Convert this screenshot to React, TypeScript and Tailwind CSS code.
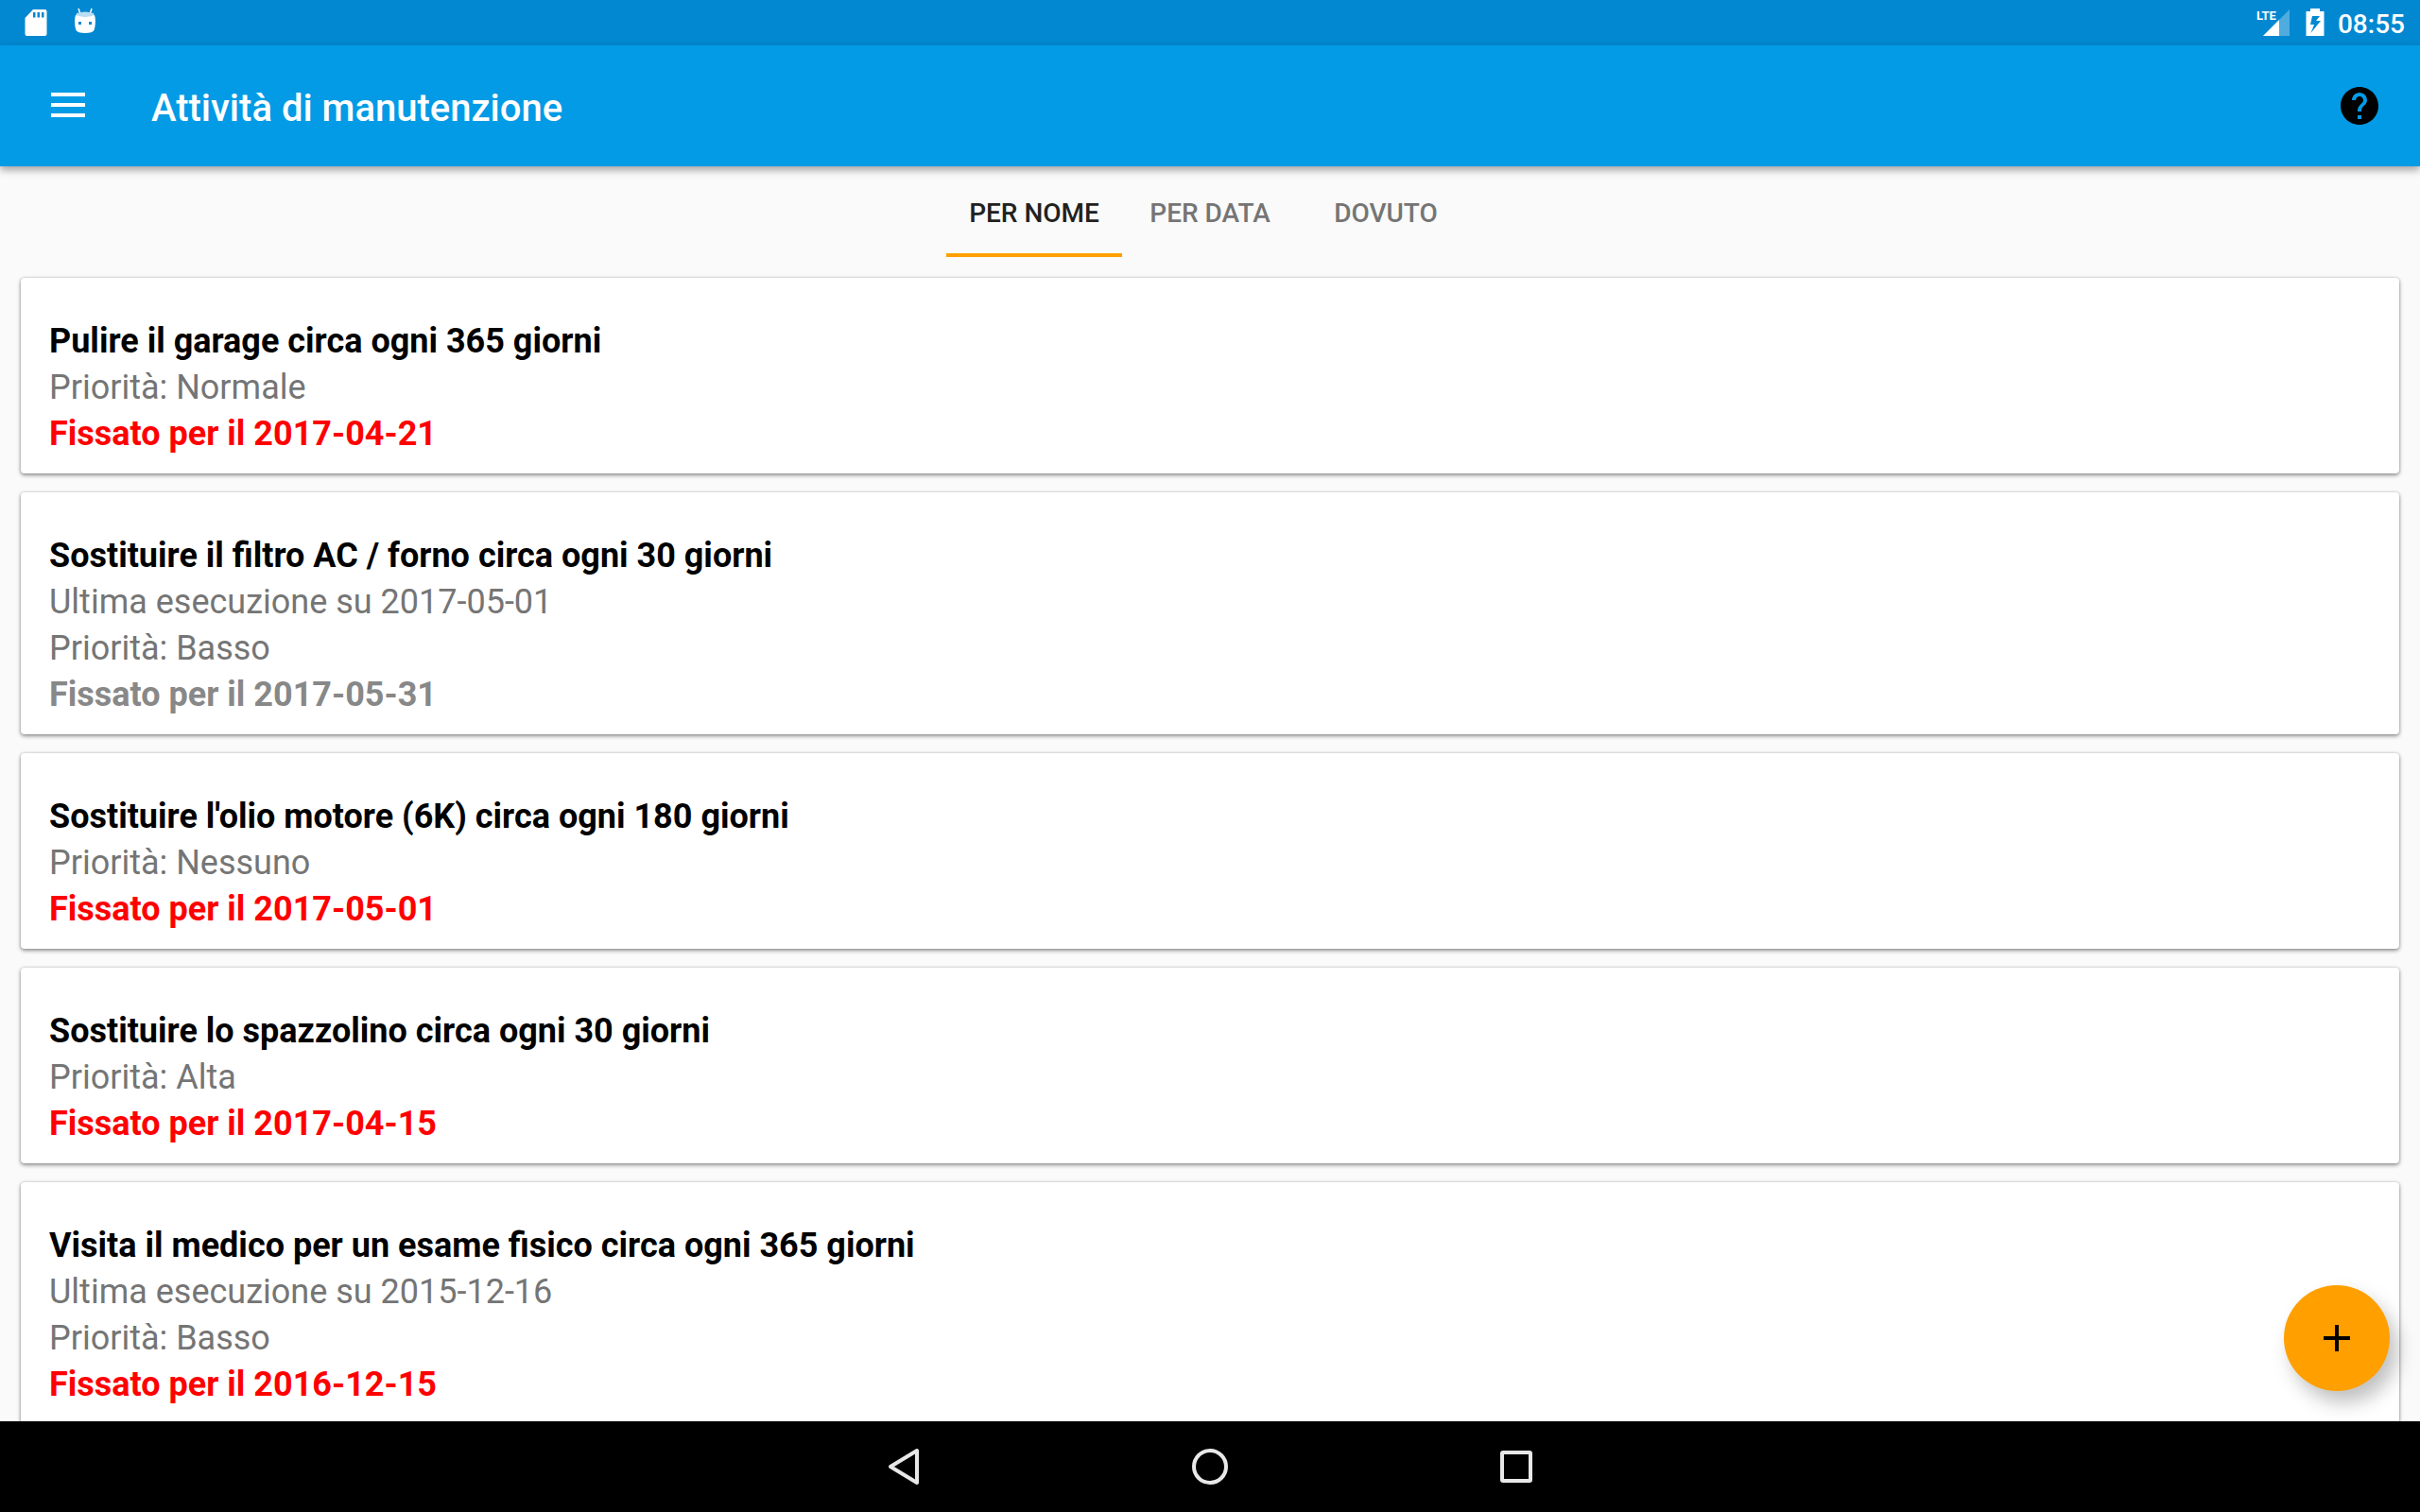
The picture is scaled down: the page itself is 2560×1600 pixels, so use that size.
import { useState } from "react";

type Task = {
  title: string;
  lastRun?: string;
  priority: string;
  due: string;
  overdue: boolean;
};

const TASKS: Task[] = [
  { title: "Pulire il garage circa ogni 365 giorni", priority: "Normale", due: "2017-04-21", overdue: true },
  { title: "Sostituire il filtro AC / forno circa ogni 30 giorni", lastRun: "2017-05-01", priority: "Basso", due: "2017-05-31", overdue: false },
  { title: "Sostituire l'olio motore (6K) circa ogni 180 giorni", priority: "Nessuno", due: "2017-05-01", overdue: true },
  { title: "Sostituire lo spazzolino circa ogni 30 giorni", priority: "Alta", due: "2017-04-15", overdue: true },
  { title: "Visita il medico per un esame fisico circa ogni 365 giorni", lastRun: "2015-12-16", priority: "Basso", due: "2016-12-15", overdue: true },
];

const TABS = ["Per nome", "Per data", "Dovuto"];

function StatusBar() {
  return (
    <div className="flex h-12 shrink-0 items-center justify-between bg-[#0288d1] pl-[26px] pr-4 text-white">
      <div className="flex items-center gap-7">
        {/* sd card */}
        <svg width="24" height="28" viewBox="0 0 24 28">
          <path
            fill="currentColor"
            fillRule="evenodd"
            d="M9 0h12.500a2 2 0 0 1 2 2v24a2 2 0 0 1-2 2h-19a2 2 0 0 1-2-2V9zM9 3v5.500h2.500V3zM13.500 3v5.500H16V3zM18 3v5.500h2.500V3z"
          />
        </svg>
        {/* android head */}
        <svg width="24" height="32" viewBox="0 0 24 32">
          <path d="M5 1l2 6M19 1l-2 6" stroke="currentColor" strokeWidth="1.500" />
          <path d="M3 6q9-3 18 0l1 4q-10 2.500-20 0z" fill="#b9def3" />
          <path
            fill="currentColor"
            fillRule="evenodd"
            d="M2 8q10 4 20 0c1.500 4 1 12-.5 16q-1.500 3-9.500 3t-9.500-3C1 20 .5 12 2 8zM5 15v3h3v-3zM16 15v3h3v-3z"
          />
        </svg>
      </div>
      <div className="flex items-center">
        <div className="relative">
          <svg width="36" height="30" viewBox="0 0 36 30">
            <path d="M35 1v28H7z" fill="#4eacdf" />
            <path d="M24 12v17H7z" fill="currentColor" />
          </svg>
          <span className="absolute top-0 left-0 font-['Liberation_Sans_Narrow',Roboto,sans-serif] text-[13px] leading-4 font-bold">
            LTE
          </span>
        </div>
        {/* charging battery */}
        <svg width="20" height="30" viewBox="0 0 20 30" className="ml-4">
          <path
            fill="currentColor"
            fillRule="evenodd"
            d="M5 0h10v3h4.500v26H.5V3H5zM7 8L5 17h4l-3.500 9L16 13h-5l4-5z"
          />
        </svg>
        <span className="ml-[14px] pt-1 text-[28px] leading-8 font-medium">08:55</span>
      </div>
    </div>
  );
}

function AppBar() {
  return (
    <header className="relative flex h-32 shrink-0 items-center bg-[#039be5] pl-12 pr-10 text-white shadow-[0_4px_8px_rgba(0,0,0,0.35)]">
      <button aria-label="Menu" className="flex size-12 items-center justify-center">
        <svg width="36" height="28" viewBox="0 0 36 28" fill="currentColor">
          <path d="M0 0h36v4H0zM0 11h36v4H0zM0 22h36v4H0z" />
        </svg>
      </button>
      <h1 className="ml-16 flex-1 pt-1.5 text-[40px] leading-12 font-medium">Attività di manutenzione</h1>
      <button aria-label="Aiuto" className="text-black">
        <svg width="48" height="48" viewBox="0 0 24 24" fill="currentColor">
          <path d="M12 2C6.480 2 2 6.480 2 12s4.480 10 10 10 10-4.480 10-10S17.520 2 12 2zm1 17h-2v-2h2v2zm2.070-7.750l-.9.920C13.450 12.900 13 13.500 13 15h-2v-.5c0-1.100.45-2.100 1.170-2.830l1.240-1.260c.37-.36.59-.86.59-1.410 0-1.100-.9-2-2-2s-2 .9-2 2H8c0-2.210 1.790-4 4-4s4 1.790 4 4c0 .88-.36 1.680-.93 2.250z" />
        </svg>
      </button>
    </header>
  );
}

function TaskCard({ task }: { task: Task }) {
  return (
    <li className="rounded-sm bg-white px-[30px] pt-[43px] pb-[17px] text-[36px] leading-[49px] text-[#757575] shadow-[0_0_3px_rgba(0,0,0,0.2),0_2px_4px_rgba(0,0,0,0.4)]">
      <h2 className="font-bold text-black">{task.title}</h2>
      {task.lastRun && <p>Ultima esecuzione su {task.lastRun}</p>}
      <p>Priorità: {task.priority}</p>
      <p className={task.overdue ? "font-bold text-[#ff0000]" : "font-bold text-[#888888]"}>
        Fissato per il {task.due}
      </p>
    </li>
  );
}

function NavBar() {
  return (
    <nav className="flex h-24 shrink-0 items-center justify-center gap-[276px] bg-black text-[#e8e8e8]">
      <button aria-label="Indietro">
        <svg width="48" height="48" viewBox="0 0 48 48" fill="none" stroke="currentColor" strokeWidth="4" strokeLinejoin="round">
          <path d="M38 7v34L10 24z" />
        </svg>
      </button>
      <button aria-label="Home">
        <svg width="48" height="48" viewBox="0 0 48 48" fill="none" stroke="currentColor" strokeWidth="4">
          <circle cx="24" cy="24" r="17" />
        </svg>
      </button>
      <button aria-label="Recenti">
        <svg width="48" height="48" viewBox="0 0 48 48" fill="none" stroke="currentColor" strokeWidth="4">
          <rect x="9" y="9" width="30" height="30" rx="1" />
        </svg>
      </button>
    </nav>
  );
}

export default function App() {
  const [tab, setTab] = useState(0);

  return (
    <div className="flex h-screen flex-col bg-[#fafafa] font-[Roboto,sans-serif]">
      <StatusBar />
      <AppBar />
      <main className="relative flex min-h-0 flex-1 flex-col">
        <div role="tablist" className="flex h-24 shrink-0 justify-center">
          {TABS.map((label, i) => (
            <button
              key={label}
              role="tab"
              aria-selected={tab === i}
              onClick={() => setTab(i)}
              className={`w-[186px] border-y-4 border-t-transparent pt-1 text-[28px] leading-8 font-medium uppercase ${
                tab === i ? "border-b-[#ffa000] text-[#212121]" : "border-b-transparent text-[#757575]"
              }`}
            >
              {label}
            </button>
          ))}
        </div>
        <ul className="flex min-h-0 flex-1 flex-col gap-5 overflow-hidden px-[22px] pt-[22px]">
          {TASKS.map(task => (
            <TaskCard key={task.title} task={task} />
          ))}
        </ul>
        <button
          aria-label="Aggiungi"
          className="absolute right-8 bottom-8 flex size-28 items-center justify-center rounded-full bg-[#ffa000] text-black shadow-[8px_12px_20px_rgba(0,0,0,0.25)]"
        >
          <svg width="28" height="28" viewBox="0 0 28 28" fill="currentColor">
            <path d="M12 0h4v12h12v4H16v12h-4V16H0v-4h12z" />
          </svg>
        </button>
      </main>
      <NavBar />
    </div>
  );
}
